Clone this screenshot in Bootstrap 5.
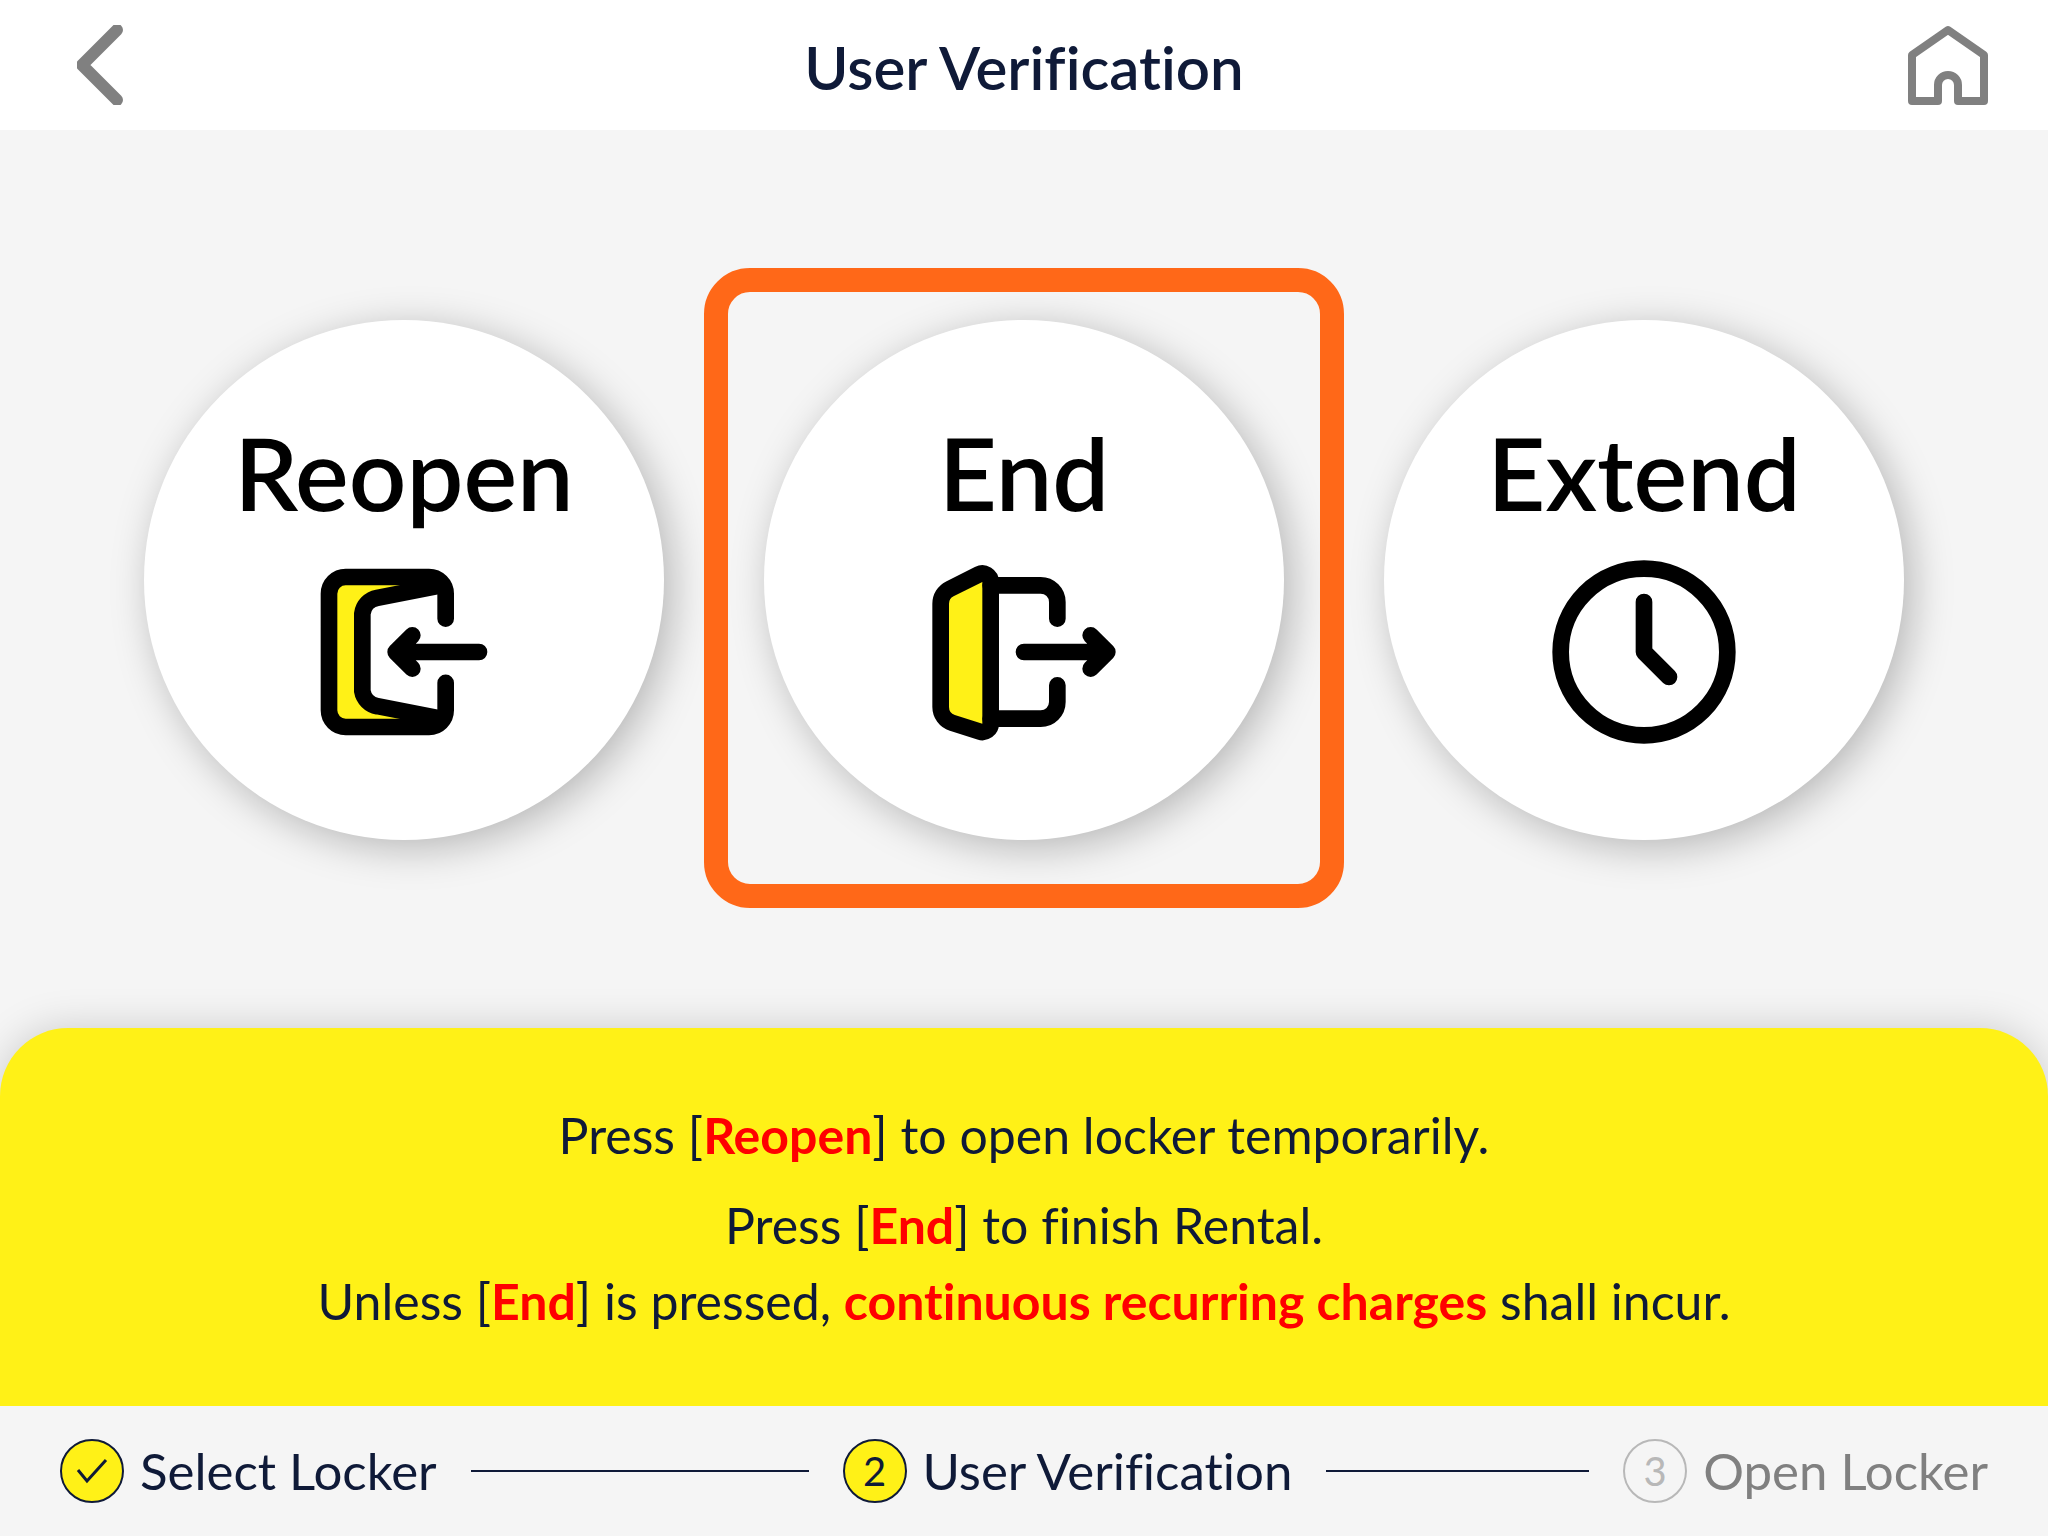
<!DOCTYPE html>
<html lang="en">
<head>
<meta charset="utf-8">
<meta name="viewport" content="width=device-width, initial-scale=1">
<title>User Verification</title>
<link href="https://cdn.jsdelivr.net/npm/bootstrap@5.3.0/dist/css/bootstrap.min.css" rel="stylesheet">
<style>
  :root { --navy: #0f1a38; --sun: #fff117; --grey: #808080; }
  body { font-family: Lato, "Open Sans", sans-serif; font-variant-ligatures: none; color: var(--navy); background: #f5f5f5; }
  .topbar { height: 130px; padding: 0 60px; }
  .topbar svg { display: block; fill: none; stroke: var(--grey); stroke-linecap: round; stroke-linejoin: round; }
  .side { flex: 1 1 0; }
  .back { margin-left: 17px; }
  .topbar h1 { font-size: 60px; line-height: 64px; font-weight: 600; padding-top: 4px; }
  .choices { gap: 100px; padding-top: 2px; }
  .choice { width: 520px; height: 520px; padding: 4px 0 0; gap: 20px; background: #fff; color: #000; box-shadow: 8px 8px 40px rgba(0, 0, 0, .26); }
  .choice:hover { background: #fff; color: #000; }
  .choice-name { font-size: 101px; line-height: 120px; font-weight: 600; }
  .choice svg { width: 200px; height: 200px; fill: none; stroke: #000; stroke-width: 2; stroke-linecap: round; stroke-linejoin: round; }
  .choice svg .door { fill: var(--sun); }
  .choice svg .gap-fill { fill: #fff; }
  .highlight { position: absolute; top: -52px; left: -60px; width: 640px; height: 640px; border: 24px solid #ff6818; border-radius: 46px; pointer-events: none; }
  .notice { background: var(--sun); border-radius: 68px 68px 0 0; padding: 69px 24px 67px; font-size: 50px; line-height: 76px; box-shadow: 0 0 40px rgba(0, 0, 0, .17); }
  .notice p { margin: 0; }
  .notice p:first-child { margin-bottom: 14px; }
  .notice strong { color: #f00; }
  .steps { height: 130px; padding: 0 60px; font-size: 51px; line-height: 64px; list-style: none; background: #f5f5f5; }
  .dot { width: 64px; height: 64px; border: 2px solid var(--navy); background: var(--sun); font-size: 40px; }
  .todo { color: var(--grey); }
  .todo .dot { color: #b8b8b8; border-color: #b8b8b8; background: none; }
  .rule { height: 2px; background: var(--navy); margin: 0 34px; flex: 9 1 0; }
  .rule-short { flex-grow: 7; }
</style>
<script src="https://cdn.jsdelivr.net/npm/bootstrap@5.3.0/dist/js/bootstrap.bundle.min.js"></script>
</head>
<body class="d-flex flex-column min-vh-100">

<header class="topbar d-flex align-items-center bg-white">
  <div class="side">
    <button type="button" class="back btn border-0 p-0" aria-label="Back">
      <svg width="46" height="80" viewBox="0 0 46 80" stroke-width="12"><path d="M40 5 5 40l35 35"/></svg>
    </button>
  </div>
  <h1 class="m-0 text-center">User Verification</h1>
  <div class="side d-flex justify-content-end">
    <a href="#" aria-label="Home">
      <svg width="80" height="80" viewBox="0 0 80 80" stroke-width="8"><path d="M40 5 76 30V76H50V60a10 10 0 0 0-20 0V76H4V30Z"/></svg>
    </a>
  </div>
</header>

<main class="choices flex-grow-1 d-flex flex-wrap align-items-center justify-content-center">
  <button type="button" class="choice btn border-0 rounded-circle d-flex flex-column align-items-center justify-content-center">
    <span class="choice-name">Reopen</span>
    <svg viewBox="0 0 24 24" aria-hidden="true">
      <path class="door" d="M17 8V5a2 2 0 0 0-2-2H5a2 2 0 0 0-2 2v14a2 2 0 0 0 2 2h10a2 2 0 0 0 2-2V8" stroke="none"/>
      <path class="gap-fill" stroke="none" d="M16 4.1 8.8 5.5A2.2 2.2 0 0 0 7 7.4v9.3a2.2 2.2 0 0 0 1.8 1.8l7.2 1.4h2V4.1z"/>
      <path d="M17 8V5a2 2 0 0 0-2-2H5a2 2 0 0 0-2 2v14a2 2 0 0 0 2 2h10a2 2 0 0 0 2-2v-3.3"/>
      <path d="M16 4.1 8.8 5.5A2.2 2.2 0 0 0 7 7.4v9.3a2.2 2.2 0 0 0 1.8 1.8L16 19.9"/>
      <path d="M21 12H11M13 10l-2 2 2 2"/>
    </svg>
  </button>
  <button type="button" class="choice btn border-0 rounded-circle position-relative d-flex flex-column align-items-center justify-content-center">
    <span class="choice-name">End</span>
    <svg viewBox="0 0 24 24" aria-hidden="true">
      <path class="door" d="M8 3.600a1 1 0 0 0-1.450-.9L3.100 4.420A2 2 0 0 0 2 6.200V18.600a2 2 0 0 0 1.400 1.900l3.300 1.050A1 1 0 0 0 8 20.600z"/>
      <path d="M8 4h6a2 2 0 0 1 2 2v2M8 20h6a2 2 0 0 0 2-2v-2M12 12h10M20 10l2 2-2 2"/>
    </svg>
    <span class="highlight"></span>
  </button>
  <button type="button" class="choice btn border-0 rounded-circle d-flex flex-column align-items-center justify-content-center">
    <span class="choice-name">Extend</span>
    <svg viewBox="0 0 24 24" aria-hidden="true"><circle cx="12" cy="12" r="10"/><path d="M12 6v6l3 3"/></svg>
  </button>
</main>

<section class="notice text-center">
  <p>Press [<strong>Reopen</strong>] to open locker temporarily.</p>
  <p>Press [<strong>End</strong>] to finish Rental.</p>
  <p>Unless [<strong>End</strong>] is pressed, <strong>continuous recurring charges</strong> shall incur.</p>
</section>

<footer>
  <ol class="steps d-flex align-items-center m-0">
    <li class="d-flex align-items-center gap-3">
      <span class="dot rounded-circle d-flex align-items-center justify-content-center"><svg width="32" height="26" viewBox="0 0 32 26" fill="none" stroke="#0f1a38" stroke-width="3" aria-label="Done"><path d="M2 12l9 11L30 2"/></svg></span>
      <span>Select Locker</span>
    </li>
    <li class="rule" aria-hidden="true"></li>
    <li class="d-flex align-items-center gap-3" aria-current="step">
      <span class="dot rounded-circle d-flex align-items-center justify-content-center">2</span>
      <span>User Verification</span>
    </li>
    <li class="rule rule-short" aria-hidden="true"></li>
    <li class="todo d-flex align-items-center gap-3">
      <span class="dot rounded-circle d-flex align-items-center justify-content-center">3</span>
      <span>Open Locker</span>
    </li>
  </ol>
</footer>

</body>
</html>
